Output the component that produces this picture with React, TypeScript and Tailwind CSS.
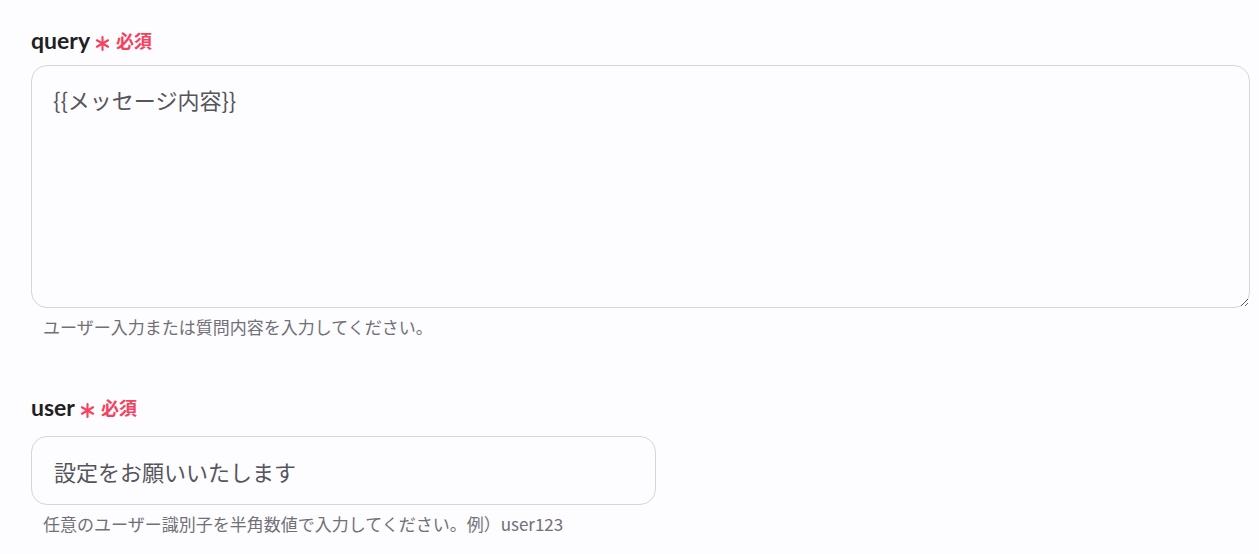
const font = { fontFamily: '"Noto Sans CJK JP", sans-serif' };

function FieldLabel({ name }: { name: string }) {
  return (
    <div className="flex items-center h-[24px]">
      <span className="text-[23px] leading-[24px] font-bold text-[#1f1f24] [font-family:Lato,'Noto_Sans_CJK_JP',sans-serif]">{name}</span>
      <svg width="15" height="15" viewBox="0 0 14 14" className="ml-[5px] mt-[6px]">
        <g stroke="#f5415e" strokeWidth="2" strokeLinecap="round">
          <line x1="7" y1="1" x2="7" y2="13" />
          <line x1="1.8" y1="4" x2="12.2" y2="10" />
          <line x1="1.8" y1="10" x2="12.2" y2="4" />
        </g>
      </svg>
      <span className="ml-[6px] text-[18px] leading-[24px] font-bold text-[#f5415e]">必須</span>
    </div>
  );
}

export default function App() {
  return (
    <div className="min-h-[554px] w-full bg-[#fdfcfe] pl-[31px] pr-[9px] pt-[28px]" style={font}>
      <FieldLabel name="query" />
      <textarea
        readOnly
        defaultValue="{{メッセージ内容}}"
        className="mt-[13px] block w-full h-[243px] rounded-[16px] border border-[#d5d5de] bg-[#fdfcfe] px-[21px] py-[18px] text-[22px] leading-[30px] text-[#55555c] outline-none resize-y"
        style={font}
      />
      <p className="mt-[8px] pl-[12px] text-[17px] leading-[22px] text-[#707078]">
        ユーザー入力または質問内容を入力してください。
      </p>

      <div className="mt-[57px]">
        <FieldLabel name="user" />
      </div>
      <input
        readOnly
        defaultValue="設定をお願いいたします"
        className="mt-[17px] block w-[625px] h-[69px] rounded-[16px] border border-[#d5d5de] bg-[#fdfcfe] px-[22px] text-[22px] text-[#55555c] outline-none"
        style={font}
      />
      <p className="mt-[8px] pl-[12px] text-[17px] leading-[22px] text-[#707078]">
        任意のユーザー識別子を半角数値で入力してください。例）user123
      </p>
    </div>
  );
}
